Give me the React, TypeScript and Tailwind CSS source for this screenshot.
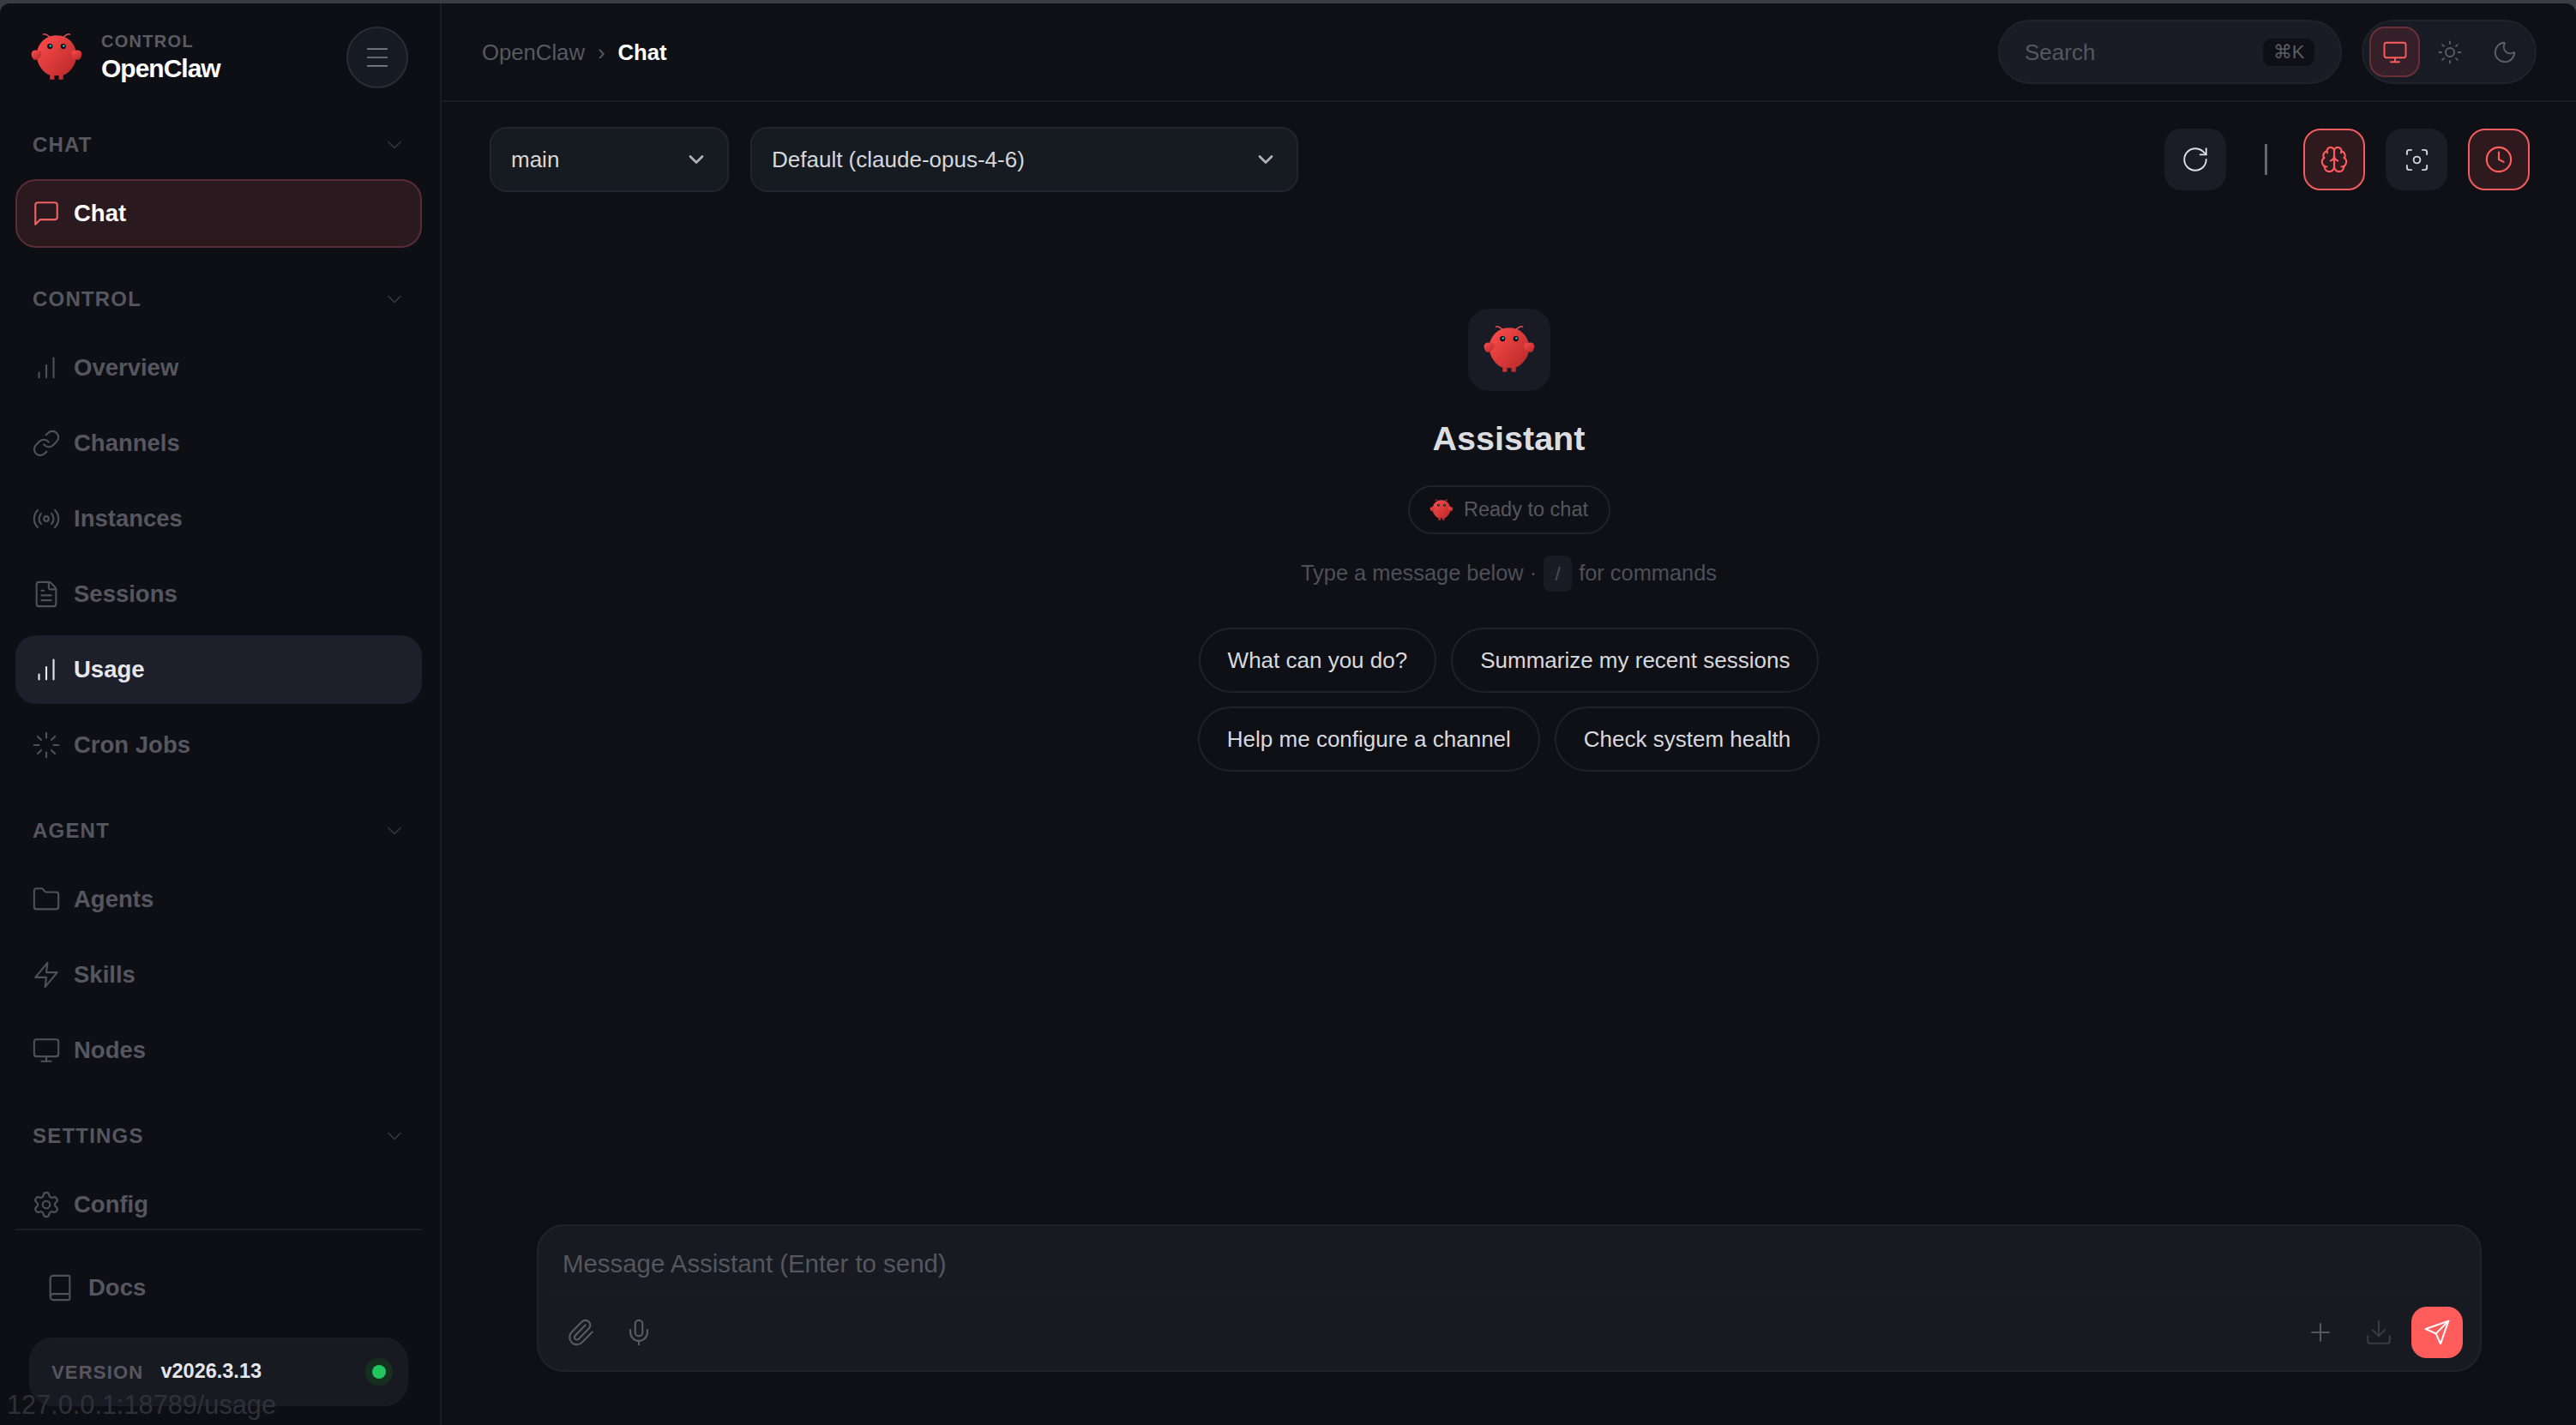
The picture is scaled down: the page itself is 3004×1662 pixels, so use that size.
import type { ReactNode } from "react";
import {
  Book,
  Brain,
  ChevronDown,
  Clock,
  Download,
  FileText,
  Focus,
  Folder,
  Loader,
  Menu,
  Mic,
  Monitor,
  Moon,
  Paperclip,
  Plus,
  Radio,
  RotateCw,
  Settings,
  Sun,
} from "lucide-react";

const Logo = ({ className }: { className: string }) => (
  <svg viewBox="0 0 120 120" className={className} fill="none">
    <defs>
      <linearGradient id="claw" x1="0%" y1="0%" x2="100%" y2="100%">
        <stop offset="0%" stopColor="#ff4d4d" />
        <stop offset="100%" stopColor="#b32626" />
      </linearGradient>
    </defs>
    <path
      d="M60 10 C30 10 15 35 15 55 C15 75 30 95 45 100 L45 110 L55 110 L55 100 C55 100 60 102 65 100 L65 110 L75 110 L75 100 C90 95 105 75 105 55 C105 35 90 10 60 10Z"
      fill="url(#claw)"
    />
    <path d="M20 45 C5 40 0 50 5 60 C10 70 20 65 25 55 C28 48 25 45 20 45Z" fill="url(#claw)" />
    <path d="M100 45 C115 40 120 50 115 60 C110 70 100 65 95 55 C92 48 95 45 100 45Z" fill="url(#claw)" />
    <path d="M45 15 Q35 5 30 8" stroke="#e05050" strokeWidth="3" strokeLinecap="round" />
    <path d="M75 15 Q85 5 90 8" stroke="#e05050" strokeWidth="3" strokeLinecap="round" />
    <circle cx="45" cy="35" r="6" fill="#050810" />
    <circle cx="75" cy="35" r="6" fill="#050810" />
    <circle cx="46" cy="34" r="2.5" fill="#00e5cc" />
    <circle cx="76" cy="34" r="2.5" fill="#00e5cc" />
  </svg>
);

const Stroke = ({ children, className = "w-[34px] h-[34px]" }: { children: ReactNode; className?: string }) => (
  <svg
    viewBox="0 0 24 24"
    className={className}
    fill="none"
    stroke="currentColor"
    strokeWidth={1.5}
    strokeLinecap="round"
    strokeLinejoin="round"
  >
    {children}
  </svg>
);

const ChatIcon = () => (
  <Stroke>
    <path d="M21 15a2 2 0 0 1-2 2H7l-4 4V5a2 2 0 0 1 2-2h14a2 2 0 0 1 2 2z" />
  </Stroke>
);
const BarsIcon = () => (
  <Stroke>
    <path d="M18 20V4" />
    <path d="M12 20V10" />
    <path d="M6 20v-4" />
  </Stroke>
);
const LinkIcon = () => (
  <Stroke>
    <path d="M10 13a5 5 0 0 0 7.54.54l3-3a5 5 0 0 0-7.07-7.07l-1.72 1.71" />
    <path d="M14 11a5 5 0 0 0-7.54-.54l-3 3a5 5 0 0 0 7.07 7.07l1.71-1.71" />
  </Stroke>
);
const ZapIcon = () => (
  <Stroke>
    <polygon points="13 2 3 14 12 14 11 22 21 10 12 10 13 2" />
  </Stroke>
);
const SendIcon = () => (
  <Stroke className="w-[32px] h-[32px]">
    <path d="M22 2 11 13" />
    <polygon points="22 2 15 22 11 13 2 9 22 2" />
  </Stroke>
);

const icon34 = "w-[34px] h-[34px]";

type NavItem = { label: string; icon: ReactNode; state?: "chat" | "usage" };

const sections: { title: string; items: NavItem[] }[] = [
  { title: "CHAT", items: [{ label: "Chat", icon: <ChatIcon />, state: "chat" }] },
  {
    title: "CONTROL",
    items: [
      { label: "Overview", icon: <BarsIcon /> },
      { label: "Channels", icon: <LinkIcon /> },
      { label: "Instances", icon: <Radio className={icon34} strokeWidth={1.5} /> },
      { label: "Sessions", icon: <FileText className={icon34} strokeWidth={1.5} /> },
      { label: "Usage", icon: <BarsIcon />, state: "usage" },
      { label: "Cron Jobs", icon: <Loader className={icon34} strokeWidth={1.5} /> },
    ],
  },
  {
    title: "AGENT",
    items: [
      { label: "Agents", icon: <Folder className={icon34} strokeWidth={1.5} /> },
      { label: "Skills", icon: <ZapIcon /> },
      { label: "Nodes", icon: <Monitor className={icon34} strokeWidth={1.5} /> },
    ],
  },
  {
    title: "SETTINGS",
    items: [{ label: "Config", icon: <Settings className={icon34} strokeWidth={1.5} /> }],
  },
];

const NavRow = ({ item }: { item: NavItem }) => {
  let box = "border-transparent text-[#55565f]";
  let iconColor = "text-[#4f5058]";
  if (item.state === "chat") {
    box = "border-[#5b2c36] bg-[#2a1a1f] text-[#fbfbfb]";
    iconColor = "text-[#ee6261]";
  }
  if (item.state === "usage") {
    box = "border-transparent bg-[#1d202b] text-[#e6e7ea]";
    iconColor = "text-[#e6e7ea]";
  }
  return (
    <div className={`flex items-center h-[80px] shrink-0 rounded-[24px] border-2 pl-[17px] gap-[15px] text-[27.5px] font-bold ${box}`}>
      <span className={iconColor}>{item.icon}</span>
      {item.label}
    </div>
  );
};

const Sidebar = () => (
  <aside className="w-[515px] h-full shrink-0 flex flex-col border-r-2 border-[#1b1d23] bg-[#0e0f15]">
    <div className="h-[115px] shrink-0 flex items-center pt-[11px] pl-[35px] pr-[37px]">
      <Logo className="w-[62px] h-[62px]" />
      <div className="ml-[21px] flex flex-col">
        <span className="text-[20px] leading-[24px] font-bold tracking-[1.3px] text-[#5a5b63]">CONTROL</span>
        <span className="mt-[2px] text-[30px] leading-[36px] font-bold tracking-[-1px] text-white">OpenClaw</span>
      </div>
      <div className="ml-auto w-[72px] h-[72px] rounded-full border-2 border-[#2a2d36] bg-[#161a22] flex items-center justify-center text-[#7d7f88]">
        <Menu className={icon34} strokeWidth={1.2} />
      </div>
    </div>
    <nav className="flex-1 min-h-0 overflow-hidden pt-[26px] pl-[18px] pr-[21px] flex flex-col gap-[36px]">
      {sections.map((section) => (
        <div key={section.title} className="flex flex-col shrink-0">
          <div className="h-[48px] mb-[16px] flex items-center justify-between pl-[20px] pr-[18px] text-[#55565f]">
            <span className="text-[24px] font-bold tracking-[1.2px]">{section.title}</span>
            <ChevronDown className="w-[28px] h-[28px] text-[#3a3b42]" strokeWidth={1.1} />
          </div>
          <div className="flex flex-col gap-[8px]">
            {section.items.map((item) => (
              <NavRow key={item.label} item={item} />
            ))}
          </div>
        </div>
      ))}
    </nav>
    <div className="mx-[18px] mr-[21px] border-t-2 border-[#1b1d23] pt-[27px]">
      <div className="h-[80px] flex items-center pl-[35px] gap-[16px] text-[27.5px] font-bold text-[#55565f]">
        <Book className={`${icon34} text-[#4f5058]`} strokeWidth={1.5} />
        Docs
      </div>
      <div className="mt-[18px] mb-[22px] mx-[16px] h-[80px] rounded-[28px] border-2 border-[#1a1c23] bg-[#181a22] flex items-center pl-[24px] pr-[16px]">
        <span className="text-[22px] font-bold tracking-[1.2px] text-[#565760]">VERSION</span>
        <span className="ml-[20px] text-[23.5px] font-bold text-[#e6e6ea]">v2026.3.13</span>
        <span className="ml-auto w-[32px] h-[32px] rounded-full bg-[#15301f] flex items-center justify-center">
          <span className="w-[16px] h-[16px] rounded-full bg-[#22c55e]" />
        </span>
      </div>
    </div>
  </aside>
);

const Header = () => (
  <header className="h-[115px] shrink-0 flex items-center justify-between pl-[47px] pr-[46px] border-b-2 border-[#1b1d23]">
    <div className="flex items-center pt-[2px] text-[25.7px]">
      <span className="text-[#575860]">OpenClaw</span>
      <span className="ml-[15px] text-[#575860]">›</span>
      <span className="ml-[15px] font-bold text-white">Chat</span>
    </div>
    <div className="flex items-center gap-[23px]">
      <div className="w-[401px] h-[75px] rounded-full border-2 border-[#1f2229] bg-[#191c24] flex items-center justify-between pl-[29px] pr-[30px]">
        <span className="pt-[2px] text-[26px] text-[#55565e]">Search</span>
        <span className="w-[60px] h-[32px] rounded-[10px] bg-[#0e1015] flex items-center justify-center text-[22px] text-[#5b5c64]">⌘K</span>
      </div>
      <div className="h-[75px] rounded-full border-2 border-[#1f2229] bg-[#181b23] flex items-center gap-[5px] pl-[7px] pr-[6px]">
        <span className="w-[59px] h-[59px] rounded-[18px] border-2 border-[#6a3038] bg-[#35202a] flex items-center justify-center text-[#ff5c5c]">
          <Monitor className="w-[30px] h-[30px]" strokeWidth={1.5} />
        </span>
        <span className="w-[59px] h-[59px] flex items-center justify-center text-[#5c5d65]">
          <Sun className="w-[30px] h-[30px]" strokeWidth={1.5} />
        </span>
        <span className="w-[59px] h-[59px] flex items-center justify-center text-[#5c5d65]">
          <Moon className="w-[30px] h-[30px]" strokeWidth={1.5} />
        </span>
      </div>
    </div>
  </header>
);

const SelectBox = ({ label, className }: { label: string; className: string }) => (
  <div className={`h-[76px] rounded-[20px] border-2 border-[#22252d] bg-[#161a21] flex items-center justify-between pl-[23px] pr-[22px] text-[26px] text-[#d6d7db] ${className}`}>
    {label}
    <ChevronDown className="w-[28px] h-[28px] text-[#b0b1b6]" strokeWidth={2.4} />
  </div>
);

const Toolbar = () => (
  <div className="mt-[29px] shrink-0 flex items-center justify-between pl-[56px] pr-[54px]">
    <div className="flex gap-[25px]">
      <SelectBox label="main" className="w-[279px]" />
      <SelectBox label="Default (claude-opus-4-6)" className="w-[639px]" />
    </div>
    <div className="flex items-center">
      <span className="w-[72px] h-[72px] rounded-[20px] bg-[#1a1d25] flex items-center justify-center text-[#e0e1e5]">
        <RotateCw className={icon34} strokeWidth={1.3} />
      </span>
      <span className="ml-[45px] mr-[42px] w-[3px] h-[36px] bg-[#66676d]" />
      <div className="flex gap-[24px]">
        <span className="w-[72px] h-[72px] rounded-[20px] border-2 border-[#f25c5e] bg-[#2e1a1e] flex items-center justify-center text-[#ff5c5c]">
          <Brain className={icon34} strokeWidth={1.5} />
        </span>
        <span className="w-[72px] h-[72px] rounded-[20px] bg-[#1a1d25] flex items-center justify-center text-[#d4d5d9]">
          <Focus className="w-[31px] h-[31px]" strokeWidth={1.5} />
        </span>
        <span className="w-[72px] h-[72px] rounded-[20px] border-2 border-[#f25c5e] bg-[#2e1a1e] flex items-center justify-center text-[#ff5c5c]">
          <Clock className={icon34} strokeWidth={1.5} />
        </span>
      </div>
    </div>
  </div>
);

const suggestions = [
  "What can you do?",
  "Summarize my recent sessions",
  "Help me configure a channel",
  "Check system health",
];

const EmptyState = () => (
  <div className="mt-[136px] flex flex-col items-center">
    <div className="w-[96px] h-[96px] rounded-[24px] bg-[#181b23] flex items-center justify-center">
      <Logo className="w-[62px] h-[62px]" />
    </div>
    <h1 className="mt-[31px] h-[48px] leading-[48px] text-[39.5px] font-bold text-[#dcdde1]">Assistant</h1>
    <div className="mt-[31px] h-[57px] w-[236px] rounded-full border-2 border-[#1f2229] flex items-center justify-center gap-[12px] text-[23.5px] text-[#56575f]">
      <Logo className="w-[28px] h-[28px]" />
      Ready to chat
    </div>
    <div className="mt-[23px] flex items-center text-[25.4px] text-[#4e4f58]">
      Type a message below ·
      <span className="mx-[8px] mt-[2px] w-[33px] h-[42px] rounded-[8px] bg-[#191c24] flex items-center justify-center text-[22px]">/</span>
      for commands
    </div>
    <div className="mt-[42px] w-[760px] flex flex-wrap justify-center gap-x-[17px] gap-y-[16px]">
      {suggestions.map((text) => (
        <div key={text} className="h-[76px] rounded-full border-2 border-[#1f2229] px-[32px] flex items-center text-[26px] text-[#d8d9de]">
          {text}
        </div>
      ))}
    </div>
  </div>
);

const Composer = () => (
  <div className="mt-auto mb-[62px] ml-[111px] mr-[110px] h-[172px] rounded-[32px] border-2 border-[#20232a] bg-[#171a21] flex flex-col">
    <div className="h-[80px] shrink-0 mx-[12px] pl-[16px] pt-[10px] flex items-center border-b-2 border-[#1a1d24] text-[29.4px] text-[#55565e]">
      Message Assistant (Enter to send)
    </div>
    <div className="flex-1 flex items-center pl-[32px] pr-[20px]">
      <Paperclip className={`${icon34} text-[#5a5b63]`} strokeWidth={1.5} />
      <Mic className={`${icon34} ml-[34px] text-[#5a5b63]`} strokeWidth={1.5} />
      <Plus className={`${icon34} ml-auto text-[#55565e]`} strokeWidth={1.5} />
      <Download className={`${icon34} ml-[34px] text-[#3a3c42]`} strokeWidth={1.5} />
      <span className="ml-[21px] w-[60px] h-[60px] rounded-[18px] bg-[#ff5c5c] flex items-center justify-center text-white">
        <SendIcon />
      </span>
    </div>
  </div>
);

export default function App() {
  return (
    <div
      className="relative w-[3004px] h-[1662px] overflow-hidden bg-[#3b3c42] pt-[4px]"
      style={{ fontFamily: '"Liberation Sans", Arial, sans-serif' }}
    >
      <div className="h-[1658px] flex rounded-t-[12px] overflow-hidden bg-[#0e1015]">
        <Sidebar />
        <main className="flex-1 min-w-0 flex flex-col">
          <Header />
          <Toolbar />
          <EmptyState />
          <Composer />
        </main>
      </div>
      <span className="absolute left-[8px] top-[1621px] text-[30.7px] leading-[36px] text-[#303138]">
        127.0.0.1:18789/usage
      </span>
    </div>
  );
}
